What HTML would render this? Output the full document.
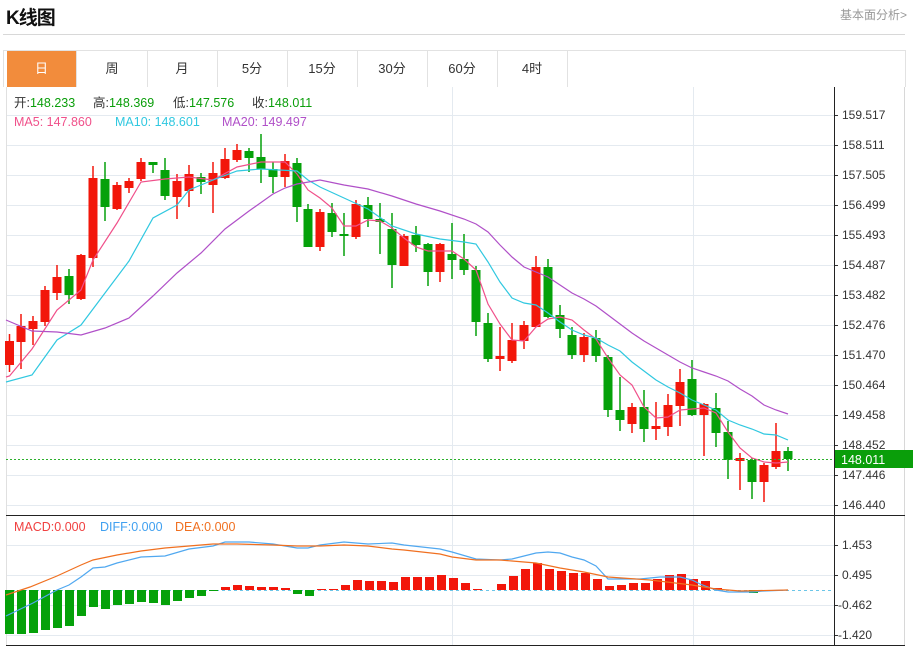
<!DOCTYPE html>
<html><head><meta charset="utf-8">
<style>
body{margin:0;width:913px;height:646px;background:#fff;overflow:hidden;font-family:"Liberation Sans","Noto Sans CJK SC",sans-serif;position:relative}
.t{position:absolute;left:6px;top:3px;font-size:19px;font-weight:bold;color:#111;letter-spacing:-1px}
.lk{position:absolute;right:6px;top:6px;font-size:12px;color:#999}
.sep{position:absolute;left:3px;top:34px;width:902px;height:1px;background:#d8d8d8}
.tabs{position:absolute;left:3px;top:50px;width:901px;height:36px;border:1px solid #e2e2e2;border-bottom:none}
.tab{position:absolute;top:0;height:36px;width:70px;border-right:1px solid #e2e2e2;text-align:center;line-height:36px;font-size:13px;color:#333}
.on{background:#f28c3c;color:#fff}
svg{position:absolute;left:0;top:0}
</style></head><body>
<div class="t">K线图</div>
<div class="lk">基本面分析&gt;</div>
<div class="sep"></div>
<div class="tabs">
<div class="tab on" style="left:3px;width:69px">日</div>
<div class="tab" style="left:73px">周</div>
<div class="tab" style="left:143px">月</div>
<div class="tab" style="left:213px">5分</div>
<div class="tab" style="left:283px">15分</div>
<div class="tab" style="left:353px">30分</div>
<div class="tab" style="left:423px">60分</div>
<div class="tab" style="left:493px">4时</div>
</div>
<svg id="s" width="913" height="646" xmlns="http://www.w3.org/2000/svg" font-family="Liberation Sans, Noto Sans CJK SC, sans-serif">
<g id="grid" stroke="#e4eaf0" stroke-width="1"></g>
<line x1="6.5" y1="87" x2="6.5" y2="645" stroke="#e0e0e0"/>
<line x1="904.5" y1="87" x2="904.5" y2="646" stroke="#d8d8d8"/>
<line x1="834.5" y1="87" x2="834.5" y2="646" stroke="#222"/>
<line x1="6" y1="515.5" x2="905" y2="515.5" stroke="#222"/>
<line x1="6" y1="645.5" x2="905" y2="645.5" stroke="#222"/>
<g id="c"></g>
<line x1="6" y1="459.5" x2="834" y2="459.5" stroke="#2db12d" stroke-dasharray="2,2"/>
<line x1="6" y1="590.5" x2="834" y2="590.5" stroke="#6cc6e8" stroke-dasharray="3,3"/>
<g id="m"></g>
<rect x="835" y="450" width="78" height="18" fill="#0a9e0a"/>
<text x="841" y="464" font-size="12.5" fill="#fff">148.011</text>
<g font-size="12" fill="#333">
<text x="842" y="119">159.517</text><text x="842" y="149">158.511</text><text x="842" y="179">157.505</text>
<text x="842" y="209">156.499</text><text x="842" y="239">155.493</text><text x="842" y="269">154.487</text>
<text x="842" y="299">153.482</text><text x="842" y="329">152.476</text><text x="842" y="359">151.470</text>
<text x="842" y="389">150.464</text><text x="842" y="419">149.458</text><text x="842" y="449">148.452</text>
<text x="842" y="479">147.446</text><text x="842" y="509">146.440</text>
<text x="842" y="549">1.453</text><text x="842" y="579">0.495</text><text x="838" y="609">-0.462</text><text x="838" y="639">-1.420</text>
</g>
<g font-size="12.5">
<text x="14" y="107" fill="#333">开:<tspan fill="#0a9e0a">148.233</tspan></text>
<text x="93" y="107" fill="#333">高:<tspan fill="#0a9e0a">148.369</tspan></text>
<text x="173" y="107" fill="#333">低:<tspan fill="#0a9e0a">147.576</tspan></text>
<text x="252" y="107" fill="#333">收:<tspan fill="#0a9e0a">148.011</tspan></text>
<text x="14" y="126" fill="#f0508a">MA5: 147.860</text>
<text x="115" y="126" fill="#30c8e0">MA10: 148.601</text>
<text x="222" y="126" fill="#b050c8">MA20: 149.497</text>
<text x="14" y="531" fill="#f04040">MACD:0.000</text>
<text x="100" y="531" fill="#40a0f0">DIFF:0.000</text>
<text x="175" y="531" fill="#f07020">DEA:0.000</text>
</g>
</svg>
<script>
var NS="http://www.w3.org/2000/svg";
function el(p,n,a){var e=document.createElementNS(NS,n);for(var k in a)e.setAttribute(k,a[k]);p.appendChild(e);return e;}
var g=document.getElementById('grid');
for(var y=115;y<=505;y+=30){el(g,'line',{x1:6,x2:834,y1:y+.5,y2:y+.5});el(g,'line',{x1:834,x2:838,y1:y+.5,y2:y+.5,stroke:'#333'});}
[545,575,605,635].forEach(function(y){el(g,'line',{x1:6,x2:834,y1:y+.5,y2:y+.5});el(g,'line',{x1:834,x2:838,y1:y+.5,y2:y+.5,stroke:'#333'});});
[452,693].forEach(function(x){el(g,'line',{x1:x+.5,x2:x+.5,y1:87,y2:645});});
var C=[[9.5,341,365,334,372,1],[21,326,342,314,369,1],[33,321,329,316,345,1],[45,290,322,286,326,1],[57,277,293,265,300,1],[69,276,295,269,304,0],[81,255,299,254,300,1],[93,178,258,166,267,1],[105,179,207,162,221,0],[117,185,209,182,210,1],[129,181,188,178,193,1],[141,162,179,158,181,1],[153,162,165,162,173,0],[165,170,196,158,200,0],[177,181,197,174,219,1],[189,174,191,165,207,1],[201,177,182,173,194,0],[213,173,185,162,213,1],[225,159,178,148,179,1],[237,150,160,144,162,1],[249,151,158,148,172,0],[261,157,169,134,183,0],[273,169,177,162,193,0],[285,161,177,154,187,1],[297,163,207,158,222,0],[308,209,247,204,247,0],[320,212,247,209,251,1],[332,213,232,203,237,0],[344,234,236,213,256,0],[356,204,237,200,239,1],[368,205,219,197,227,0],[380,219,222,203,254,0],[392,229,265,213,288,0],[404,236,266,234,266,1],[416,235,245,226,252,0],[428,244,272,243,286,0],[440,244,272,243,282,1],[452,254,260,223,279,0],[464,259,270,234,275,0],[476,270,322,266,336,0],[488,323,359,313,362,0],[500,356,359,327,371,1],[512,340,361,323,363,1],[524,325,341,321,349,1],[536,267,327,256,327,1],[548,267,317,259,318,0],[560,315,329,305,338,0],[572,335,355,327,359,0],[584,337,355,333,362,1],[596,338,356,330,362,0],[608,357,410,355,417,0],[620,410,420,377,431,0],[632,407,424,403,433,1],[644,407,429,390,442,0],[656,426,429,402,440,1],[668,405,427,394,436,1],[680,382,406,369,426,1],[692,379,415,360,416,0],[704,404,415,403,456,1],[716,408,433,393,447,0],[728,432,460,421,479,0],[740,458,461,453,490,1],[752,460,482,458,499,0],[764,465,482,463,502,1],[776,451,467,423,469,1],[788,451,459,447,471,0]];
var c=document.getElementById('c');
C.forEach(function(d){var col=d[5]?'#f2160a':'#05a10a';
el(c,'line',{x1:d[0],x2:d[0],y1:d[3],y2:d[4],stroke:col,'stroke-width':1.5});
el(c,'rect',{x:d[0]-4.5,y:d[1],width:9,height:Math.max(2,d[2]-d[1]),fill:col});});
function pl(pts,col){el(c,'polyline',{points:pts.map(function(p){return p.join(',')}).join(' '),fill:'none',stroke:col,'stroke-width':1.2});}
pl([[6,377],[9.5,376],[32,349],[57,310],[81,290],[93,260],[117,223],[141,182],[165,179],[189,177],[213,180],[237,167],[261,162],[285,162],[297,174],[308,190],[320,198],[332,208],[344,226],[356,226],[368,220],[380,221],[392,228],[404,238],[416,247],[428,251],[452,251],[464,259],[476,270],[488,304],[500,324],[512,340],[524,341],[536,327],[548,319],[560,317],[572,320],[584,330],[596,339],[608,358],[620,375],[632,385],[644,407],[656,418],[668,417],[680,410],[692,409],[704,408],[716,413],[728,432],[740,448],[752,458],[764,462],[776,463],[788,462]],'#f0508a');
pl([[6,382],[32,375],[57,340],[81,325],[105,293],[129,261],[153,218],[177,205],[189,190],[213,180],[237,171],[261,169],[297,171],[308,180],[320,187],[344,198],[368,209],[392,226],[416,234],[440,239],[464,242],[476,244],[488,262],[500,282],[512,298],[524,303],[536,305],[548,313],[560,322],[572,330],[584,335],[596,338],[608,345],[620,351],[632,362],[644,371],[656,380],[668,387],[680,393],[692,400],[704,405],[716,410],[728,420],[740,425],[752,429],[764,434],[776,435],[788,440]],'#30c8e0');
pl([[6,320],[32,331],[57,332],[81,335],[105,328],[129,318],[153,296],[177,273],[201,253],[225,229],[249,211],[273,194],[285,188],[297,184],[320,180],[344,185],[368,189],[392,196],[416,204],[440,211],[464,219],[476,224],[488,232],[500,245],[512,257],[524,267],[536,272],[548,277],[560,285],[572,293],[584,299],[596,306],[608,315],[620,324],[632,333],[644,341],[656,348],[668,355],[680,362],[692,368],[704,372],[716,376],[728,381],[740,389],[752,396],[764,405],[776,410],[788,414]],'#b050c8');
var H=[634,634,633,630,628,626,616,607,609,605,604,602,603,605,601,598,596,591,587,585,586,587,587,588,594,596,589,589,585,580,581,581,582,577,577,577,575,578,583,589,590,584,576,569,563,569,571,573,573,579,586,585,583,583,579,575,574,579,581,588,590,590,593,590,590,590];
var m=document.getElementById('m');
H.forEach(function(h,i){var x=9.5+i*12;if(Math.abs(h-590)<1)return;
if(h>590)el(m,'rect',{x:x-4.5,y:590,width:9,height:h-590,fill:'#05a10a'});else el(m,'rect',{x:x-4.5,y:h,width:9,height:590-h,fill:'#f2160a'});});
function pm(pts,col){el(m,'polyline',{points:pts.map(function(p){return p.join(',')}).join(' '),fill:'none',stroke:col,'stroke-width':1.2});}
pm([[6,616],[33,603],[57,590],[69,585],[81,577],[93,568],[105,567],[117,563],[141,557],[165,556],[189,549],[213,546],[225,542],[249,542],[273,544],[297,548],[308,548],[320,545],[344,542],[368,544],[392,543],[404,545],[440,549],[452,552],[476,559],[500,560],[512,559],[524,556],[536,553],[548,552],[560,553],[572,557],[584,560],[596,566],[608,579],[640,579],[660,577],[680,577],[692,580],[700,584],[716,590],[728,592],[752,592],[764,591],[788,590]],'#50a8f0');
pm([[6,595],[30,587],[57,576],[81,565],[93,560],[117,555],[141,551],[165,548],[189,546],[213,544],[237,544],[273,545],[297,546],[320,546],[344,545],[368,546],[392,549],[404,550],[440,554],[452,557],[476,560],[500,560],[512,561],[536,563],[560,568],[584,572],[608,577],[650,580],[692,585],[716,589],[740,591],[788,590]],'#f07020');
</script>
</body></html>
